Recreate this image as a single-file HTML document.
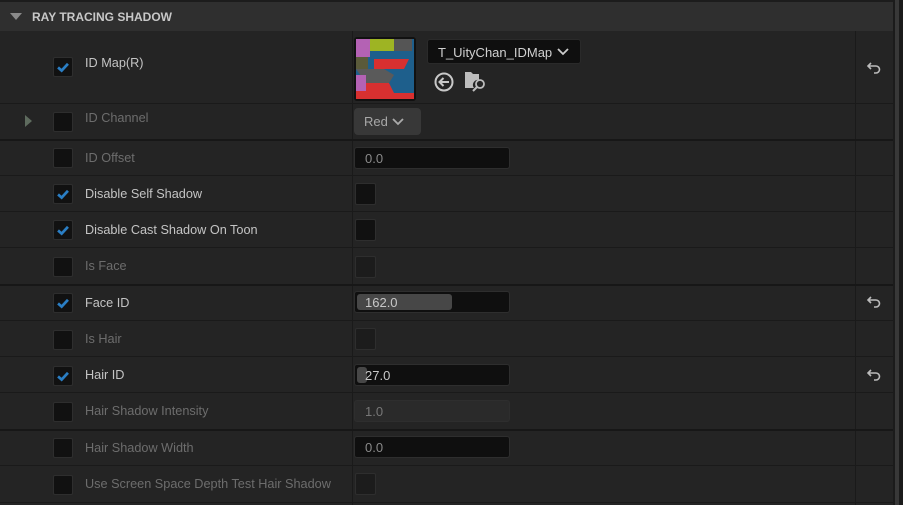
<!DOCTYPE html>
<html><head><style>
body{margin:0;width:903px;height:505px;background:#242424;overflow:hidden;font-family:"Liberation Sans",sans-serif;position:relative}
.a{position:absolute}
.hdr{left:0;top:0;width:893px;height:31px;background:#2f2f2f;border-top:2px solid #1c1c1c;box-sizing:border-box}
.hdr span{position:absolute;left:32px;top:8px;color:#c8c8c8;font-weight:bold;font-size:12px}
.line{left:0;width:893px;height:1px;background:#1a1a1a}
.thick{height:2px;background:#171717}
.vl{width:1px;background:#1a1a1a}
.cb{width:20px;height:20px;background:#111;border:1px solid #2e2e2e;border-radius:2px;box-sizing:border-box}
.lbl{font-size:12.7px;color:#c4c4c4}
.dim{color:#6d6d6d}
.num{height:22px;background:#0f0f0f;border:1px solid #2e2e2e;border-radius:3px;box-sizing:border-box;font-size:13px;color:#c8c8c8;padding:3px 0 0 10px}
</style></head><body>
<div class="a hdr"><svg class="a" style="left:10px;top:11px" width="12" height="8"><path d="M0 0H12L6 7Z" fill="#8a8a8a"/></svg><span>RAY TRACING SHADOW</span></div>
<div class="a" style="left:893px;top:0;width:10px;height:505px;background:#1b1b1b"></div>
<div class="a" style="left:895px;top:0;width:4px;height:505px;background:#383838"></div>
<div class="a vl" style="left:352px;top:31px;height:474px"></div>
<div class="a vl" style="left:855px;top:31px;height:474px"></div>
<div class="a line" style="top:103px"></div>
<div class="a line thick" style="top:139px"></div>
<div class="a line" style="top:175px"></div>
<div class="a line" style="top:211px"></div>
<div class="a line" style="top:247px"></div>
<div class="a line thick" style="top:284px"></div>
<div class="a line" style="top:320px"></div>
<div class="a line" style="top:356px"></div>
<div class="a line" style="top:392px"></div>
<div class="a line thick" style="top:429px"></div>
<div class="a line" style="top:465px"></div>
<div class="a line" style="top:502px"></div>

<svg width="0" height="0" style="position:absolute"><defs><symbol id="ck" viewBox="0 0 20 20"><path d="M4.5 10.5L8.5 14L15.5 6.5" stroke="#2a7ec4" stroke-width="3" fill="none"/></symbol></defs></svg>
<div class="a cb" style="left:53px;top:57px"><svg width="18" height="18"><use href="#ck"/></svg></div>
<div class="a lbl" style="left:85px;top:56px">ID Map(R)</div>
<svg class="a" style="left:25px;top:115px" width="8" height="12"><path d="M0 0L7 6L0 12Z" fill="#5e6b5e"/></svg>
<div class="a cb" style="left:53px;top:112px"></div>
<div class="a lbl dim" style="left:85px;top:111px">ID Channel</div>
<div class="a cb" style="left:53px;top:148px"></div>
<div class="a lbl dim" style="left:85px;top:151px">ID Offset</div>
<div class="a cb" style="left:53px;top:184px"><svg width="18" height="18"><use href="#ck"/></svg></div>
<div class="a lbl" style="left:85px;top:187px">Disable Self Shadow</div>
<div class="a cb" style="left:53px;top:220px"><svg width="18" height="18"><use href="#ck"/></svg></div>
<div class="a lbl" style="left:85px;top:223px">Disable Cast Shadow On Toon</div>
<div class="a cb" style="left:53px;top:257px"></div>
<div class="a lbl dim" style="left:85px;top:259px">Is Face</div>
<div class="a cb" style="left:53px;top:293px"><svg width="18" height="18"><use href="#ck"/></svg></div>
<div class="a lbl" style="left:85px;top:296px">Face ID</div>
<div class="a cb" style="left:53px;top:330px"></div>
<div class="a lbl dim" style="left:85px;top:332px">Is Hair</div>
<div class="a cb" style="left:53px;top:366px"><svg width="18" height="18"><use href="#ck"/></svg></div>
<div class="a lbl" style="left:85px;top:368px">Hair ID</div>
<div class="a cb" style="left:53px;top:402px"></div>
<div class="a lbl dim" style="left:85px;top:404px">Hair Shadow Intensity</div>
<div class="a cb" style="left:53px;top:438px"></div>
<div class="a lbl dim" style="left:85px;top:441px">Hair Shadow Width</div>
<div class="a cb" style="left:53px;top:475px"></div>
<div class="a lbl dim" style="left:85px;top:477px">Use Screen Space Depth Test Hair Shadow</div>

<svg class="a" style="left:354px;top:37px" width="62" height="64" viewBox="0 0 62 64">
<rect x="0" y="0" width="62" height="64" rx="3" fill="#111"/>
<rect x="2" y="2" width="58" height="60" fill="#1e5f8c"/>
<path d="M2 2H16V20H2Z" fill="#b462b4"/>
<path d="M16 2H40V14H16Z" fill="#9eb423"/>
<path d="M40 2H58V14H40Z" fill="#555"/>
<path d="M2 20H14V32H2Z" fill="#5a5a3a"/>
<path d="M20 22H55L50 32H20Z" fill="#d83030"/>
<path d="M2 32H30L40 38L35 46H12Z" fill="#5a5a5a"/>
<path d="M2 38H12V54H2Z" fill="#b462b4"/>
<path d="M12 46H35L40 56H60V62H2V54H12Z" fill="#d83030"/>
</svg>
<div class="a" style="left:427px;top:39px;width:154px;height:25px;background:#0f0f0f;border:1px solid #2a2a2a;border-radius:3px;box-sizing:border-box;font-size:13px;color:#d0d0d0;padding:5px 0 0 10px">T_UityChan_IDMap<svg style="position:absolute;left:129px;top:8px" width="12" height="8"><path d="M1 1L6 6L11 1" stroke="#ccc" stroke-width="1.8" fill="none"/></svg></div>
<svg class="a" style="left:433px;top:71px" width="22" height="22"><circle cx="11" cy="11" r="8.5" stroke="#c8c8c8" stroke-width="2" fill="none"/><path d="M16 11H7M10.5 7L6.5 11L10.5 15" stroke="#c8c8c8" stroke-width="2" fill="none"/></svg>
<svg class="a" style="left:464px;top:70px" width="24" height="22"><path d="M1 2H7L9 4H15V10A5 5 0 0 0 10 18H1Z" fill="#bdbdbd"/><circle cx="16" cy="14" r="4" stroke="#bdbdbd" stroke-width="1.8" fill="none"/><path d="M13 17L9 21" stroke="#bdbdbd" stroke-width="2"/></svg>
<div class="a" style="left:354px;top:108px;width:67px;height:27px;background:#383838;border-radius:4px;font-size:13px;color:#a8a8a8;box-sizing:border-box;padding:6px 0 0 10px">Red<svg style="position:absolute;left:38px;top:10px" width="12" height="8"><path d="M1 1L6 6L11 1" stroke="#aaa" stroke-width="1.8" fill="none"/></svg></div>

<div class="a num" style="left:354px;top:147px;width:156px;color:#8a8a8a">0.0</div>
<div class="a cb" style="left:355px;top:183px;width:21px;height:22px"></div>
<div class="a cb" style="left:355px;top:219px;width:21px;height:22px"></div>
<div class="a cb" style="left:355px;top:256px;width:21px;height:22px;background:#1c1c1c"></div>
<div class="a num" style="left:354px;top:291px;width:156px;padding:0"><div style="position:absolute;left:2px;top:2px;width:95px;height:16px;background:#474747;border-radius:3px"></div><span style="position:absolute;left:10px;top:3px">162.0</span></div>
<div class="a cb" style="left:355px;top:328px;width:21px;height:22px;background:#1c1c1c"></div>
<div class="a num" style="left:354px;top:364px;width:156px;padding:0"><div style="position:absolute;left:2px;top:2px;width:10px;height:16px;background:#474747;border-radius:3px"></div><span style="position:absolute;left:10px;top:3px">27.0</span></div>
<div class="a num" style="left:354px;top:400px;width:156px;background:#2a2a2a;color:#777">1.0</div>
<div class="a num" style="left:354px;top:436px;width:156px;color:#8a8a8a">0.0</div>
<div class="a cb" style="left:355px;top:473px;width:21px;height:22px;background:#1c1c1c"></div>

<svg width="0" height="0" style="position:absolute"><defs><symbol id="rv" viewBox="0 0 16 14"><path d="M5 2L2 5L5 8M2 5H10A3.5 3.5 0 0 1 10 12H8" stroke="#bbb" stroke-width="1.6" fill="none"/></symbol></defs></svg>
<svg class="a" style="left:866px;top:61px" width="16" height="14"><use href="#rv"/></svg>
<svg class="a" style="left:866px;top:295px" width="16" height="14"><use href="#rv"/></svg>
<svg class="a" style="left:866px;top:368px" width="16" height="14"><use href="#rv"/></svg>
</body></html>
